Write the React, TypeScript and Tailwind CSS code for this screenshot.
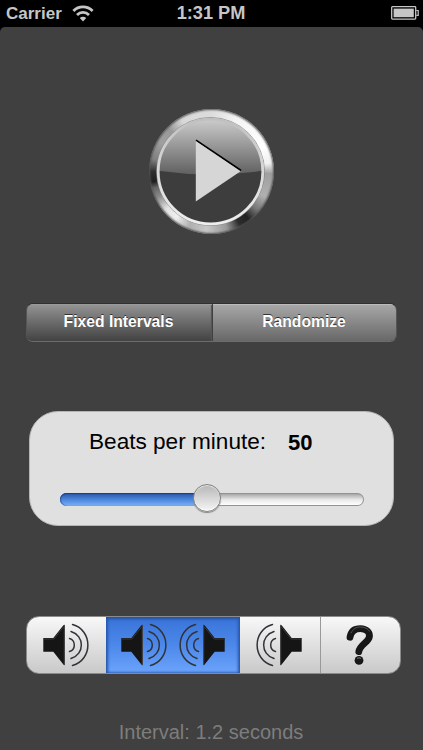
import { useState } from 'react';
import clsx from 'clsx';

// ── Status bar ─────────────────────────────────────────────────────────────

function WifiIcon() {
  return (
    <svg width="22" height="17" viewBox="0 0 22 17" fill="none" stroke="#c6c6c6" strokeWidth="2.8">
      <path d="M1.4 5.9 A13.4 13.4 0 0 1 20.6 5.9" />
      <path d="M5 9.9 A8.6 8.6 0 0 1 17 9.9" />
      <path d="M11 16.4 L7.8 13 A4.6 4.6 0 0 1 14.2 13 Z" fill="#c6c6c6" stroke="none" />
    </svg>
  );
}

function BatteryIcon() {
  return (
    <svg width="28" height="14" viewBox="0 0 28 14" fill="none">
      <rect x="0.7" y="0.7" width="24" height="12.4" rx="0.8" stroke="#c6c6c6" strokeWidth="1.3" />
      <rect x="2.6" y="2.6" width="20.2" height="8.6" fill="#c6c6c6" />
      <path d="M25.3 4.5 H27.2 V9.4 H25.3" stroke="#c6c6c6" strokeWidth="1.2" />
    </svg>
  );
}

function StatusBar() {
  return (
    <header className="grid h-[27px] grid-cols-[1fr_70px_1fr] items-center bg-black pr-[4px] pl-[6px] text-[17px] font-bold text-[#c6c6c6]">
      <div className="flex items-center gap-[10px]">
        <span className="leading-[27px]">Carrier</span>
        <WifiIcon />
      </div>
      <span className="-ml-[3px] text-center text-[18.2px] leading-[27px] whitespace-nowrap">1:31 PM</span>
      <div className="flex justify-end pb-px">
        <BatteryIcon />
      </div>
    </header>
  );
}

// ── Play button ────────────────────────────────────────────────────────────

function PlayButton() {
  return (
    <button
      aria-label="Play"
      className="flex size-[125px] items-center justify-center rounded-full bg-[conic-gradient(#dcdcdc_0deg,#f4f4f4_25deg,#ffffff_65deg,#f0f0f0_82deg,#a0a0a0_92deg,#b0b0b0_115deg,#777_130deg,#222_142deg,#2c2c2c_152deg,#999_165deg,#c8c8c8_185deg,#b0b0b0_202deg,#eee_217deg,#e4e4e4_230deg,#888_245deg,#666_254deg,#202020_260deg,#303030_270deg,#808080_282deg,#a0a0a0_300deg,#999_315deg,#d8d8d8_330deg,#dcdcdc_360deg)] shadow-[inset_0_0_2px_1px_#555]"
    >
      <svg width="109" height="109" viewBox="0 0 109 109" className="-translate-x-px">
        <defs>
          <linearGradient id="gloss" x1="0" y1="0" x2="0" y2="1">
            <stop offset="0" stopColor="#d0d0d0" />
            <stop offset="1" stopColor="#606060" />
          </linearGradient>
          <linearGradient id="rim" x1="0" y1="0" x2="0" y2="1">
            <stop offset="0" stopColor="#c0c0c0" />
            <stop offset="0.4" stopColor="#d4d4d4" />
            <stop offset="1" stopColor="#eeeeee" />
          </linearGradient>
          <clipPath id="disc">
            <circle cx="54.5" cy="54.5" r="52" />
          </clipPath>
        </defs>
        <circle cx="54.5" cy="54.5" r="52" fill="#3d3d3d" />
        <path d="M0 0 H109 V53.5 Q54.5 61.5 0 53.5 Z" fill="url(#gloss)" clipPath="url(#disc)" />
        <circle cx="54.5" cy="54.5" r="54" fill="none" stroke="#808080" strokeWidth="0.8" />
        <circle cx="54.5" cy="54.5" r="52.3" fill="none" stroke="url(#rim)" strokeWidth="2.8" />
        <path d="M40 23.2 L85 53.4" stroke="#000" strokeWidth="1.8" />
        <path d="M39.8 24 L84.6 54.3 L39.8 84.6 Z" fill="#d6d6d6" />
      </svg>
    </button>
  );
}

// ── Interval mode ──────────────────────────────────────────────────────────

const MODES = ['Fixed Intervals', 'Randomize'];

function ModeControl() {
  const [mode, setMode] = useState(0);
  return (
    <div className="ml-[26px] flex h-[39px] w-[371px] overflow-hidden rounded-[7px] border border-t-[#303030] border-r-[#555] border-b-[#6c6c6c] border-l-[#555]">
      {MODES.map((label, i) => (
        <button
          key={label}
          onClick={() => setMode(i)}
          className={clsx(
            'pb-px text-[15.7px] font-bold text-white [text-shadow:0_-1px_0_#333]',
            i === 0 ? 'w-[186px] border-r border-[#404040] pr-[2px]' : 'flex-1 pr-px',
            i === mode
              ? 'bg-linear-to-b from-[#959595] to-[#434343] shadow-[inset_0_1px_0_#999,inset_-1px_0_1px_#555]'
              : 'bg-linear-to-b from-[#a9a9a9] to-[#686868] shadow-[inset_0_1px_0_#bbb]',
          )}
        >
          {label}
        </button>
      ))}
    </div>
  );
}

// ── Tempo ──────────────────────────────────────────────────────────────────

function TempoSlider({ percent }: { percent: number }) {
  return (
    <div className="relative flex h-[13px] w-[304px] items-stretch rounded-full">
      <div
        className="rounded-l-full bg-linear-to-b from-[#2456a6] via-[#4c86da] to-[#7db0f8] shadow-[inset_0_1px_1px_#173f8a,inset_1px_0_1px_#3163b0]"
        style={{ width: `${percent}%` }}
      />
      <div className="flex-1 rounded-r-full border border-l-0 border-[#929292] bg-linear-to-b from-[#a8a8a8] via-[#e7e7e7] to-white" />
      <div
        className="absolute -top-[9px] size-[28px] -translate-x-1/2 rounded-full border border-[#858585] bg-linear-to-b from-[#b7b7b7] to-[#f6f6f6] shadow-[inset_0_1px_1px_#e8e8e8,inset_0_-1px_1px_#fff,0_1px_1px_#888]"
        style={{ left: `${percent}%` }}
      />
    </div>
  );
}

function TempoPanel() {
  return (
    <section className="ml-[29px] flex h-[115px] w-[365px] flex-col rounded-[29px] border border-[#b5b5b5] bg-[#e0e0e0] pt-[16px] pl-[30px]">
      <div className="flex items-baseline gap-[22px] pl-[29px] leading-[28px] text-black">
        <span className="text-[22.6px]">Beats per minute:</span>
        <span className="relative top-px text-[22px] font-bold">50</span>
      </div>
      <div className="mt-[37px]">
        <TempoSlider percent={48.5} />
      </div>
    </section>
  );
}

// ── Channel toolbar ────────────────────────────────────────────────────────

function Speaker({ flip = false }: { flip?: boolean }) {
  return (
    <svg width="46" height="44" viewBox="0 0 46 44" className={clsx(flip && '-scale-x-100')}>
      <path d="M0.3 15 H10.3 L20 2.8 Q21.9 0.6 21.9 2.8 V41 Q21.9 43.4 20 41 L10.3 28.7 H0.3 Z" fill="#151515" />
      <path d="M1 16 H10.8 L20.5 4" fill="none" stroke="#444" strokeWidth="0.8" />
      <path d="M21.3 2 V42" stroke="#555" strokeWidth="0.8" />
      <g fill="none" stroke="#303338" strokeWidth="1.5" strokeLinecap="round">
        <path d="M26.5 15.5 C32.9 17.5 32.9 26.5 26.5 28.5" />
        <path d="M28 8.5 C41.8 12.5 41.8 31.5 28 35.5" />
        <path d="M29.5 1.5 C50 7 50 37 29.5 42.5" />
      </g>
    </svg>
  );
}

function QuestionMark() {
  return (
    <svg width="28" height="42" viewBox="0 0 28 42" fill="none">
      <path
        d="M4 13.2 C5 7 9 4.6 14.3 4.6 C20.5 4.6 24.4 8.4 23.2 13.4 C22 18.6 14 20.6 12.8 27.6"
        stroke="#171717"
        strokeWidth="6.8"
        strokeLinecap="round"
      />
      <path d="M5 9 C7.4 4.5 10 3 14.3 3 C18 3 22 4.4 23.6 7.2" stroke="#555" strokeWidth="1" strokeLinecap="round" />
      <circle cx="13" cy="36.4" r="4.4" fill="#171717" />
      <path d="M11 34.4 Q13 33.2 15 34.4" stroke="#777" strokeWidth="1" />
    </svg>
  );
}

function ChannelBar() {
  return (
    <nav className="ml-[26px] flex h-[58px] w-[375px] overflow-hidden rounded-[13px] border border-[#8b8b8b] bg-linear-to-b from-[#f8f8f8] to-[#c9c9c9]">
      <button aria-label="Left" className="flex w-[79px] items-center justify-center pr-[2px]">
        <Speaker />
      </button>
      <button
        aria-label="Both"
        className="flex w-[134px] items-center justify-center gap-[12px] bg-linear-to-b from-[#3973d8] via-[#4c88ea] via-50% to-[#6ca4fb] pr-px shadow-[inset_0_2px_3px_#2454a8,inset_2px_0_3px_#2c5cb4,inset_-2px_0_3px_#2c5cb4]"
      >
        <Speaker />
        <Speaker flip />
      </button>
      <button aria-label="Right" className="flex w-[81px] items-center justify-center border-r border-[#999] pr-[2px]">
        <Speaker flip />
      </button>
      <button aria-label="Help" className="flex flex-1 items-center justify-center pr-px">
        <QuestionMark />
      </button>
    </nav>
  );
}

// ── App ────────────────────────────────────────────────────────────────────

export default function App() {
  return (
    <div className="flex h-[750px] w-[423px] flex-col overflow-hidden bg-black font-['Liberation_Sans',Arial,sans-serif]">
      <StatusBar />
      <main className="flex flex-1 flex-col rounded-t-[5px] bg-[#404040] pt-[82px]">
        <div className="flex justify-center">
          <PlayButton />
        </div>
        <div className="mt-[69px]">
          <ModeControl />
        </div>
        <div className="mt-[69px]">
          <TempoPanel />
        </div>
        <div className="mt-[90px]">
          <ChannelBar />
        </div>
        <p className="mt-[45px] pr-px text-center text-[20px] leading-[26px] text-[#7d7d7d]">Interval: 1.2 seconds</p>
      </main>
    </div>
  );
}
